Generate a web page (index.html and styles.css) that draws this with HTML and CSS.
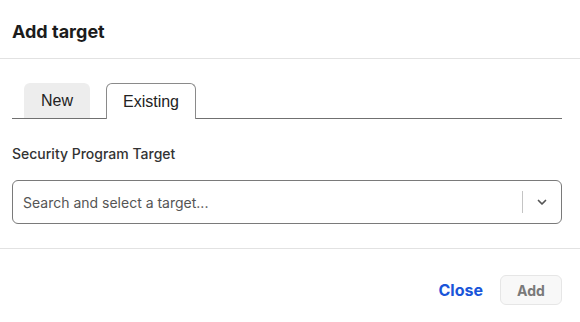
FILE: index.html
```html
<!DOCTYPE html>
<html>
<head>
<meta charset="utf-8">
<link rel="stylesheet" href="styles.css">
</head>
<body>
<div class="modal">
  <div class="header"><h1 class="title">Add target</h1></div>
  <div class="content">
    <div class="tabs">
      <div class="tab tab-inactive">New</div>
      <div class="tab tab-active">Existing</div>
    </div>
    <div class="field">
      <label class="label">Security Program Target</label>
      <div class="select">
        <span class="placeholder">Search and select a target...</span>
        <span class="sep"></span>
        <span class="chev"><svg width="12" height="8" viewBox="0 0 12 8"><path d="M2.5 2.5 L6 6 L9.5 2.5" fill="none" stroke="#555" stroke-width="1.7" stroke-linecap="round" stroke-linejoin="round"/></svg></span>
      </div>
    </div>
  </div>
  <div class="footer">
    <button class="btn-link">Close</button>
    <button class="btn-add">Add</button>
  </div>
</div>
</body>
</html>
```

FILE: styles.css
```css
* { box-sizing: border-box; }
body {
  margin: 0;
  background: #fff;
  font-family: Inter, "Noto Sans", sans-serif;
  color: #222;
}
.header {
  padding: 20px 12px 14px;
  border-bottom: 1px solid #e2e2e2;
}
.title {
  margin: 0;
  font-size: 18px;
  line-height: 24px;
  font-weight: 700;
  color: #1c1c1c;
}
.content {
  padding: 24px 18px 24px 12px;
  border-bottom: 1px solid #e2e2e2;
}
.tabs {
  display: flex;
  gap: 16px;
  padding-left: 12px;
  border-bottom: 1px solid #707070;
}
.tab {
  height: 35px;
  display: flex;
  align-items: center;
  justify-content: center;
  font-family: "Liberation Sans", Arial, sans-serif;
  font-size: 16px;
  color: #222;
  border-radius: 6px 6px 0 0;
}
.tab-inactive {
  width: 66px;
  background: #ededed;
}
.tab-active {
  width: 90px;
  height: 36px;
  margin-bottom: -1px;
  background: #fff;
  border: 1px solid #8a8a8a;
  border-bottom: none;
}
.field {
  padding-top: 25px;
}
.label {
  display: block;
  font-size: 14px;
  line-height: 20px;
  font-weight: 500;
  color: #333;
  margin-bottom: 16px;
}
.select {
  height: 44px;
  border: 1px solid #7a7a7a;
  border-radius: 6px;
  display: flex;
  align-items: center;
  padding-left: 10px;
}
.placeholder {
  flex: 1;
  font-size: 14px;
  color: #555;
}
.sep {
  width: 1px;
  height: 22px;
  background: #c4c4c4;
}
.chev {
  width: 38px;
  display: flex;
  justify-content: center;
  align-items: center;
}
.chev svg { display: block; }
.footer {
  display: flex;
  justify-content: flex-end;
  align-items: center;
  gap: 17px;
  padding: 26px 18px 0 12px;
}
.btn-link {
  background: none;
  border: none;
  padding: 0;
  font-family: Inter, sans-serif;
  font-size: 16px;
  font-weight: 700;
  color: #1955d9;
}
.btn-add {
  width: 62px;
  height: 30px;
  background: #f8f8f8;
  border: 1px solid #e6e6e6;
  border-radius: 6px;
  font-family: Inter, sans-serif;
  font-size: 14px;
  font-weight: 700;
  color: #7a7a7a;
}
```
